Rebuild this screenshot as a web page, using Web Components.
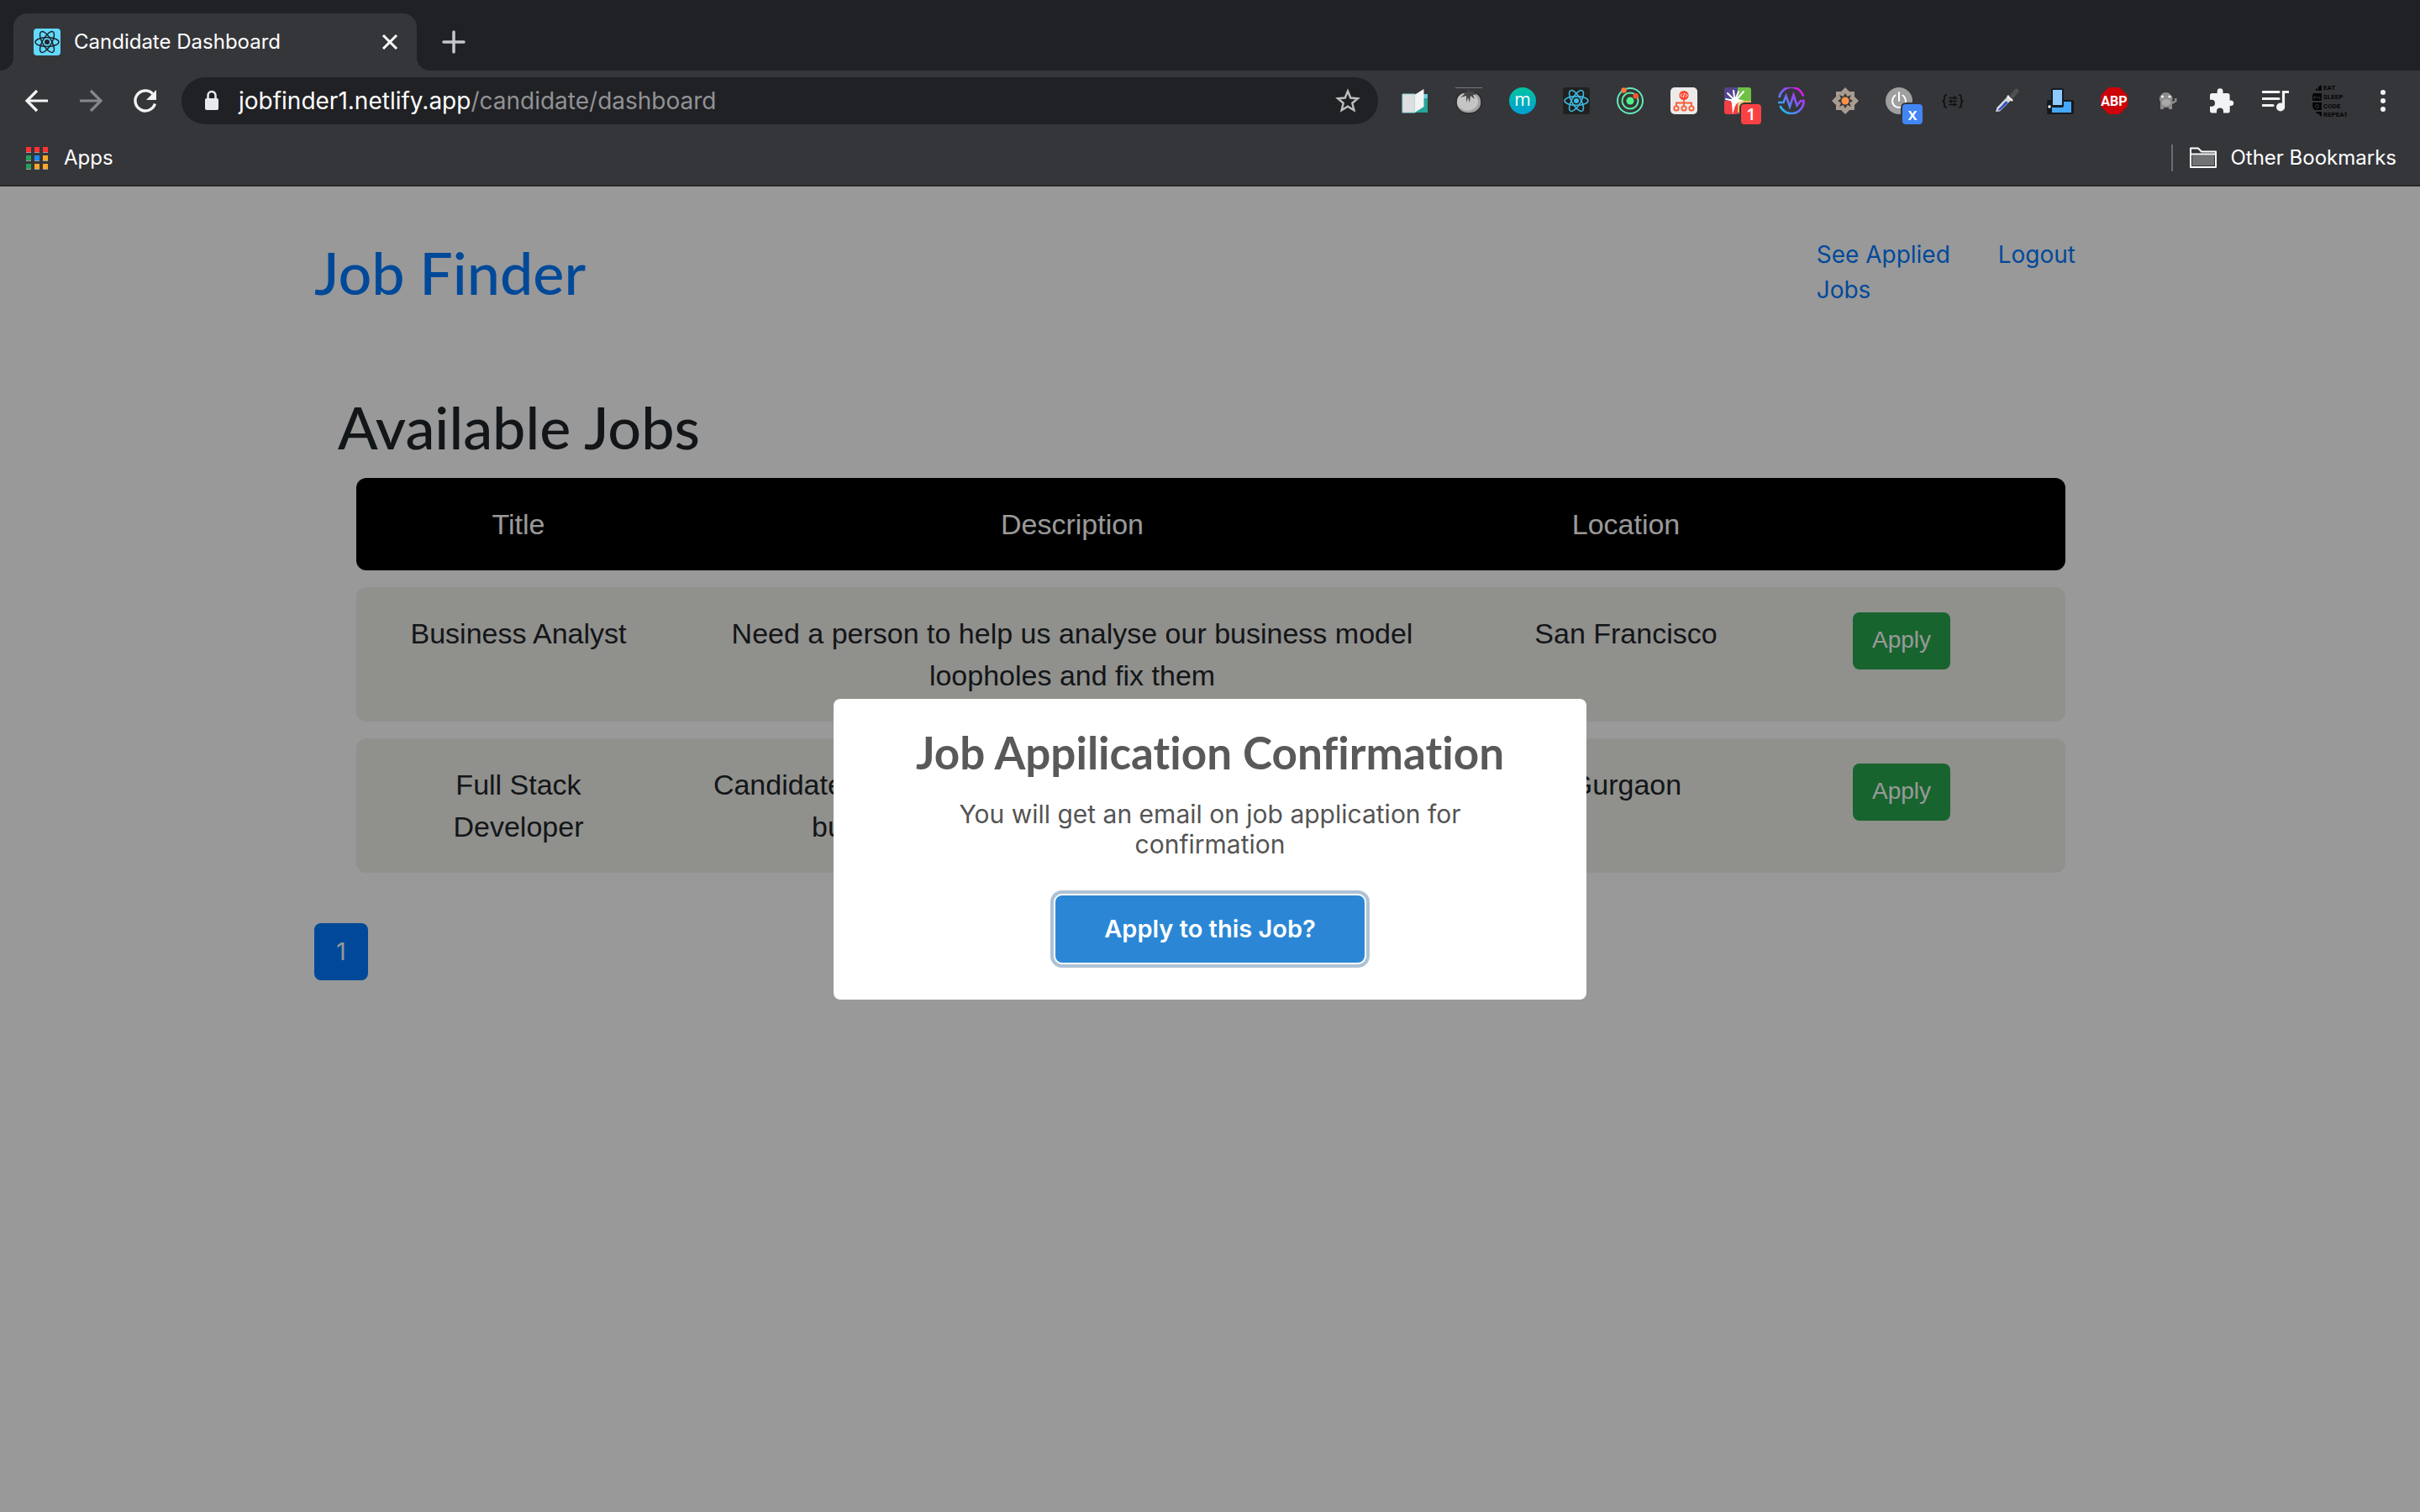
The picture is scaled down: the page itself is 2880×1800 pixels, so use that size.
<!DOCTYPE html>
<html lang="en">
<head>
<meta charset="utf-8">
<title>Candidate Dashboard</title>
<style>
  html, body { height: 100%; margin: 0; }
  body { font-family: Inter, "Liberation Sans", sans-serif; color: #212529; background: #fff; }
</style>
</head>
<body>
<browser-window>
  <tab-strip slot="tabs" label="Candidate Dashboard"></tab-strip>
  <tool-bar slot="toolbar" host="jobfinder1.netlify.app" path="/candidate/dashboard"></tool-bar>
  <bookmarks-bar slot="bookmarks"></bookmarks-bar>
  <candidate-page>
    <job-header slot="header">Job Finder</job-header>
    <job-table></job-table>
    <page-list slot="pages"></page-list>
    <confirm-dialog slot="dialog">
      <span slot="title">Job Appilication Confirmation</span>
      <span slot="text">You will get an email on job application for confirmation</span>
      <span slot="action">Apply to this Job?</span>
    </confirm-dialog>
  </candidate-page>
</browser-window>

<script>
const ORBITS = (c, w) => `<g fill="none" stroke="${c}" stroke-width="${w}"><ellipse cx="16" cy="16" rx="14" ry="5.4"/><ellipse cx="16" cy="16" rx="14" ry="5.4" transform="rotate(60 16 16)"/><ellipse cx="16" cy="16" rx="14" ry="5.4" transform="rotate(120 16 16)"/></g><circle cx="16" cy="16" r="3" fill="${c}"/>`;

const ICONS = {
  favicon: `<rect width="32" height="32" rx="4" fill="#61dafb"/>${ORBITS('#20232a', 1.5)}`,
  close: `<path d="M8 8l16 16M24 8L8 24" stroke="#fff" stroke-width="3" fill="none"/>`,
  plus: `<path d="M16 4v24M4 16h24" stroke="#c4c7cb" stroke-width="3.5" stroke-linecap="round"/>`,
  back: `<path d="M29 16H5M16 4L4 16l12 12" stroke="#f1f3f4" stroke-width="3.2" fill="none"/>`,
  forward: `<path d="M3 16h24M16 4l12 12-12 12" stroke="#85878a" stroke-width="3.2" fill="none"/>`,
  reload: `<path d="M28.400 19.500A12 12 0 1 1 25.600 7.600" stroke="#f1f3f4" stroke-width="3.4" fill="none"/><path d="M30 3v12H18z" fill="#f1f3f4"/>`,
  lock: `<rect x="8" y="13" width="16" height="14" rx="2" fill="#e8eaed"/><path d="M11.500 14V9.500a4.500 4.500 0 0 1 9 0V14" stroke="#e8eaed" stroke-width="2.500" fill="none"/>`,
  star: `<path d="M16 4.500l3.300 8 8.600.7-6.600 5.600 2.100 8.400L16 22.700l-7.400 4.500 2.100-8.400-6.600-5.600 8.600-.7z" fill="none" stroke="#bfbfbf" stroke-width="2.400"/>`,
  book: `<path d="M20 8h11v22H14z" fill="#26a69a"/><path d="M24 8h7v5h-7z" fill="#6ecbe0"/><path d="M1 8h15v22H1z" fill="#dedede" stroke="#8adbe0" stroke-width="1"/><path d="M16 8.500L26.500 2v21L16 29.800z" fill="#f3f3f3"/>`,
  tomato: `<path d="M0 .5h32" stroke="#77787a" stroke-width="1"/><path d="M16 7C6 3 1 11 1 18c0 8 7 13 15 13s15-5 15-13C31 11 26 3 16 7z" fill="#a2a2a2" stroke="#2a2a2a" stroke-width="1.500"/><ellipse cx="14.500" cy="17" rx="12.500" ry="10.500" fill="#c5c5c5"/><path d="M14 1l1 6-6-2 2 3-5 4 7-2v8l2-6 2 6 1-8 5 4-2-5 5-1-5-2 3-2-6 1z" fill="#454545"/>`,
  mmm: `<defs><linearGradient id="g" x2="0" y2="1"><stop stop-color="#00c4a0"/><stop offset="1" stop-color="#009fd4"/></linearGradient></defs><circle cx="16" cy="16" r="16" fill="url(#g)"/><text x="16" y="22" font-family="Open Sans" font-size="21" text-anchor="middle" fill="#fff">m</text>`,
  react: `<rect width="32" height="32" rx="3" fill="#20211f"/>${ORBITS('#3cb9e3', 1.6)}`,
  rings: `<circle cx="16" cy="16" r="4.500" fill="#4ff08a"/><g fill="none" stroke-width="2"><circle cx="16" cy="16" r="9.500" stroke="#58ef9b"/><circle cx="16" cy="16" r="15" stroke="#63e9b8"/></g><circle cx="8.500" cy="3.500" r="3.200" fill="#fb7b3c"/><circle cx="22.700" cy="10.300" r="3.200" fill="#fb5430"/>`,
  tree: `<rect width="32" height="32" rx="5" fill="#ecebea"/><circle cx="16" cy="9.500" r="5.600" fill="#fc4632"/><path d="M14 7.500l-2 2 2 2M18 7.500l2 2-2 2M16.700 7l-1.400 5" stroke="#fff" stroke-width="1" fill="none"/><g fill="none" stroke="#fc5a32" stroke-width="1.800"><path d="M16 15v7M7 22v-3.500h18V22"/><circle cx="7" cy="25" r="2.700"/><circle cx="16" cy="25" r="2.700"/><circle cx="25" cy="25" r="2.700"/></g>`,
  splash: `<path d="M3 0h13v16H0V3a3 3 0 0 1 3-3z" fill="#54458e"/><path d="M16 0h13a3 3 0 0 1 3 3v13H16z" fill="#6fc045"/><path d="M0 16h16v16H3a3 3 0 0 1-3-3z" fill="#f23f43"/><path d="M16 16h16v14H16z" fill="#f6b951"/><path d="M17.500 18h15v14h-15z" fill="#ead9a0"/><g stroke="#fff" stroke-width="2" stroke-linecap="round"><path d="M12 16L2 14M12 15L4 7M12.500 15L11 4M13 15L17 5M14 15L23 5"/></g><path d="M7 14l10 0 7 2-8 2-3 4-3 10-1-13z" fill="#fff"/>`,
  wave: `<defs><linearGradient id="g" x1="0" y1="1" x2="1" y2="0"><stop stop-color="#00dcea"/><stop offset=".5" stop-color="#7464f5"/><stop offset="1" stop-color="#ff00f0"/></linearGradient></defs><g fill="none" stroke="url(#g)" stroke-width="2.600"><path d="M1.500 12A14.600 14.600 0 0 1 30 10.500M2.500 22A14.600 14.600 0 0 0 30.600 16H27l-4.500 5.500-4-12.500-4.500 14-4.500-13-3 8H0"/></g>`,
  flower: `<path d="M16 0l5 5h6v6l5 5-5 5v6h-6l-5 5-5-5H5v-6l-5-5 5-5V5h6z" fill="#a89b90"/><path d="M16 7l2.500 4 4.500-2-2 4.500 4 2.500-4 2.500 2 4.500-4.500-2-2.500 4-2.500-4-4.500 2 2-4.500-4-2.500 4-2.500-2-4.500 4.500 2z" fill="#38383a"/><circle cx="16" cy="16" r="4.500" fill="#fd9248"/>`,
  power: `<circle cx="16" cy="16" r="16" fill="#9f9f9f"/><path d="M16 6v10M11.500 9.500a8 8 0 1 0 9 0" stroke="#fff" stroke-width="2" fill="none" stroke-linecap="round"/>`,
  braces: `<path d="M9 9c-3 0-3 1-3 4s-1 3.500-2.500 3.500C5 16.500 6 17 6 20s0 4 3 4M23 9c3 0 3 1 3 4s1 3.500 2.500 3.500C27 16.500 26 17 26 20s0 4-3 4M11 12.500h10M11 16.500h10M11 20.500h10M18 10.500v4M14 14.500v4M18 18.500v4" fill="none" stroke="#101011" stroke-width="1.700"/>`,
  dropper: `<path d="M3 29l1.500-5L17 11l4.500 4L8 28.500z" fill="#d8d8d8"/><path d="M5 27.500l10-11 3 1.500L8.500 27z" fill="#2c50c8"/><path d="M17 10l6 6" stroke="#f4f4f4" stroke-width="2.500"/><path d="M19 11l6-8c3-3 7 0 5 3l-7 8z" fill="#505050"/>`,
  devices: `<rect x="0" y="15" width="32" height="17" rx="2" fill="#15181c"/><rect x="6" y="17" width="23" height="13" fill="#45a8fa"/><rect x="5" y="1" width="15" height="23" rx="2" fill="#161d25"/><rect x="7" y="3" width="11" height="18" fill="#8ecafd"/><circle cx="3" cy="23" r="1.700" fill="#fff"/>`,
  abp: `<path d="M9.400 0h13.200L32 9.400v13.200L22.600 32H9.400L0 22.600V9.400z" fill="#cc0308"/><text x="16" y="21.500" font-family="Roboto" font-weight="700" font-size="16" text-anchor="middle" fill="#fff">ABP</text>`,
  beast: `<path d="M7 26V17c-2-2-1-7 1-8 1-4 10-4 11 0 3 1 3 5 2 8v9h-4v-2h-6v2z" fill="#8c8c8c"/><path d="M20 17l4-1v-3h2.500v4l-5 3z" fill="#8c8c8c"/><circle cx="9.500" cy="11" r="1.500" fill="#fff"/><circle cx="18" cy="11" r="1.500" fill="#fff"/><ellipse cx="14" cy="18" rx="5.500" ry="4" fill="#a9a9a9"/>`,
  puzzle: `<path d="M27.500 15.500H25.600V9.500a2.500 2.500 0 0 0-2.500-2.500H17.500V4.700a3.400 3.400 0 0 0-6.800 0V7H4.500A2.500 2.500 0 0 0 2 9.500v5.300h2a4 4 0 0 1 0 8H2v5.500A2.500 2.500 0 0 0 4.500 30.500H10v-2a4 4 0 0 1 8 0v2h5.200a2.500 2.500 0 0 0 2.500-2.500v-6h1.800a3.300 3.300 0 0 0 0-6.500z" fill="#f1f3f4"/>`,
  music: `<path d="M1 5.500h19M1 13.500h19M1 21.500h12M25.500 24V5.500H31" stroke="#f1f3f4" stroke-width="3.200" fill="none" stroke-linecap="round"/><circle cx="22" cy="23.500" r="5" fill="#f1f3f4"/>`,
  dots: `<g fill="#f1f3f4"><circle cx="16" cy="6" r="3"/><circle cx="16" cy="16" r="3"/><circle cx="16" cy="26" r="3"/></g>`,
  avatar: `<defs><clipPath id="c"><circle cx="21" cy="21" r="21"/></clipPath></defs><g clip-path="url(#c)"><g fill="#050505"><path d="M2 9V6h2v3M5 9V4h2v5M8 9V0h4v9H1z"/><rect x="1" y="12" width="11" height="9" rx="1"/><rect x="1" y="23" width="11" height="9" rx="1"/><rect x="1" y="34" width="11" height="9" rx="1"/></g><path d="M3 15v4M3 17h7v2" stroke="#35363a" fill="none"/><circle cx="6.500" cy="27.500" r="2" fill="none" stroke="#35363a"/><circle cx="7.500" cy="38.500" r="2" fill="none" stroke="#35363a"/></g><g fill="#050505" font-family="Liberation Sans Narrow, Roboto" font-weight="700" font-size="8"><text x="14" y="8">EAT</text><text x="14" y="19">SLEEP</text><text x="14" y="30">CODE</text><text x="14" y="40">REPEAT</text></g>`,
  folder: `<path d="M1 27V4.500h9l4 4h17V27z" fill="none" stroke="#fff" stroke-width="2" stroke-linejoin="round"/><path d="M3 13h26v12H3z" fill="#717275"/><path d="M1 11.500h30" stroke="#fff" stroke-width="2"/>`,
  apps: ['#ff3131 #ff3131 #ff3131', '#2a9e57 #1a8cf7 #f9a825', '#2a9e57 #f9a825 #f9a825'].map((r, y) => r.split(' ').map((c, x) => `<rect x="${3 + x * 10}" y="${3 + y * 10}" width="6" height="6" fill="${c}"/><rect x="${3 + x * 10}" y="${9 + y * 10}" width="6" height="1" fill="#9a9a9a"/>`).join('')).join('')
};

function define(name, render) {
  customElements.define(name, class extends HTMLElement {
    connectedCallback() {
      if (this.shadowRoot) return;
      this.attachShadow({ mode: 'open' }).innerHTML = render(this);
    }
  });
}

define('ui-icon', el => {
  const size = +(el.getAttribute('size') || 32);
  const box = el.getAttribute('name') === 'avatar' ? 42 : 32;
  return `<style>:host{display:block;flex:none}svg{display:block}</style>
  <svg width="${size}" height="${size}" viewBox="0 0 ${box} ${box}" aria-hidden="true">${ICONS[el.getAttribute('name')]}</svg>`;
});

define('browser-window', () => `<style>
  :host{display:flex;flex-direction:column;min-height:100vh}
  header{display:flex;flex-direction:column;background:#35363a;border-bottom:2px solid #28292b}
  main{flex:1;display:flex;flex-direction:column}
</style><header><slot name="tabs"></slot><slot name="toolbar"></slot><slot name="bookmarks"></slot></header><main><slot></slot></main>`);

define('tab-strip', el => `<style>
  :host{display:flex;align-items:flex-end;background:#202124;height:84px;padding-left:16px}
  .tab{position:relative;display:flex;align-items:center;box-sizing:border-box;width:480px;height:68px;padding:0 16px 0 24px;gap:16px;background:#35363a;border-radius:16px 16px 0 0;color:#fff;font-size:24px;line-height:32px}
  .tab::before,.tab::after{content:"";position:absolute;bottom:0;width:16px;height:16px}
  .tab::before{right:100%;background:radial-gradient(circle at 0 0,#202124 16px,#35363a 16px)}
  .tab::after{left:100%;background:radial-gradient(circle at 100% 0,#202124 16px,#35363a 16px)}
  .label{flex:1}
  button{border:0;padding:0;background:none;display:flex}
  .new{align-self:stretch;align-items:center;padding:16px 0 0 28px}
</style>
<div class="tab"><ui-icon name="favicon"></ui-icon><span class="label">${el.getAttribute('label')}</span><button aria-label="Close tab"><ui-icon name="close"></ui-icon></button></div>
<button class="new" aria-label="New tab"><ui-icon name="plus"></ui-icon></button>`);

define('tool-button', el => `<style>
  :host{display:block;flex:none;width:64px}
  button{position:relative;display:flex;align-items:center;justify-content:center;width:64px;height:56px;border:0;padding:0;background:none}
  .badge{position:absolute;left:34px;top:30px;width:24px;height:24px;border:2px solid #35363a;border-radius:6px;color:#fff;background:${el.getAttribute('badge-color')};font:600 20px/24px "Open Sans",sans-serif}
</style><button aria-label="${el.getAttribute('name')}"><ui-icon name="${el.getAttribute('name')}" size="${el.getAttribute('size') || 32}"></ui-icon>${el.hasAttribute('badge') ? `<span class="badge">${el.getAttribute('badge')}</span>` : ''}</button>`);

define('tool-bar', el => {
  const tools = ['book', 'tomato', 'mmm', 'react', 'rings', 'tree', 'splash', 'wave', 'flower', 'power', 'braces', 'dropper', 'devices', 'abp', 'beast', 'puzzle', 'music', 'avatar', 'dots'];
  const extra = { splash: 'badge="1" badge-color="#f94144"', power: 'badge="x" badge-color="#4285f4"', avatar: 'size="42"' };
  return `<style>
  :host{display:flex;align-items:center;padding:8px 12px}
  .address{flex:1;display:flex;align-items:center;height:56px;margin:0 12px;padding:0 20px;border-radius:28px;background:#202124;color:#fff;font-size:28px;line-height:36px}
  .url{flex:1;padding-left:16px}
  .path{color:#909295}
</style>
<tool-button name="back"></tool-button><tool-button name="forward"></tool-button><tool-button name="reload"></tool-button>
<div class="address"><ui-icon name="lock"></ui-icon><div class="url" role="textbox" aria-label="Address">${el.getAttribute('host')}<span class="path">${el.getAttribute('path')}</span></div><ui-icon name="star"></ui-icon></div>
${tools.map(t => `<tool-button name="${t}" ${extra[t] || ''}></tool-button>`).join('')}`;
});

define('bookmarks-bar', () => `<style>
  :host{display:flex;align-items:center;justify-content:space-between;height:64px;padding:0 28px;color:#fff;font-size:24px;line-height:32px}
  a{display:flex;align-items:center;gap:16px;color:inherit;text-decoration:none}
  .other{border-left:2px solid #6b6c6f;padding-left:20px}
</style><a href="#"><ui-icon name="apps"></ui-icon>Apps</a><a class="other" href="#"><ui-icon name="folder"></ui-icon>Other Bookmarks</a>`);

define('candidate-page', () => `<style>
  :host{position:relative;display:block;flex:1}
  .container{display:flex;flex-direction:column;box-sizing:border-box;max-width:2132px;margin:0 auto;padding-top:60px}
</style><div class="container"><slot name="header"></slot><slot></slot><slot name="pages"></slot></div><slot name="dialog"></slot>`);

define('job-header', () => `<style>
  :host{display:flex;align-items:flex-start;justify-content:space-between;padding-right:36px}
  h1{margin:0;font:500 70px/84px Lato,sans-serif}
  a{color:#007bff;text-decoration:none}
  nav{display:flex;gap:48px;font-size:28px;line-height:42px}
  nav a:first-child{width:168px}
</style><h1><a href="#"><slot></slot></a></h1><nav><a href="#">See Applied Jobs</a><a href="#">Logout</a></nav>`);

define('job-table', () => {
  const jobs = [
    ['Business Analyst', 'Need a person to help us analyse our business model loopholes and fix them', 'San Francisco'],
    ['Full Stack Developer', 'Candidate must have good work experience for full stack<br>building our core application from scratch', 'Gurgaon']
  ];
  return `<style>
  :host{display:block;margin-top:100px}
  h2{margin:0 28px;font:500 70px/84px Lato,sans-serif}
  .wrap{margin:0 48px 0 50px}
  table{width:100%;table-layout:fixed;border-collapse:separate;border-spacing:0 20px;margin-top:-1px;font:400 34px/50px "Liberation Sans",sans-serif;text-align:center}
  col.side{width:358px}col.place{width:330px}
  th,td{padding:30px;vertical-align:top;font-weight:400}
  th{background:#000;color:#fff}
  td{background:#f0f0ec}
  th:first-child,td:first-child{padding-left:58px;border-radius:12px 0 0 12px}
  th:last-child,td:last-child{padding-right:62px;border-radius:0 12px 12px 0}
  button{display:block;margin:0 auto;height:68px;padding:0 23px 2px;border:0;border-radius:8px;background:#28a74d;color:#fff;font:400 28px/42px "Liberation Sans",sans-serif}
</style><h2>Available Jobs</h2>
<div class="wrap"><table><colgroup><col class="side"><col><col class="place"><col class="side"></colgroup>
<thead><tr><th scope="col">Title</th><th scope="col">Description</th><th scope="col">Location</th><th></th></tr></thead>
<tbody>${jobs.map(j => `<tr>${j.map(t => `<td>${t}</td>`).join('')}<td><button>Apply</button></td></tr>`).join('')}</tbody></table></div>`;
});

define('page-list', () => `<style>
  :host{display:flex;margin-top:40px}
  button{width:64px;height:68px;border:0;border-radius:8px;background:#007bff;color:#fff;font:400 28px/42px Inter,sans-serif}
</style><button aria-current="page">1</button>`);

define('confirm-dialog', () => `<style>
  :host{position:absolute;inset:0;display:grid;place-items:center;background:rgba(0,0,0,.4)}
  section{display:flex;flex-direction:column;align-items:center;box-sizing:border-box;width:896px;padding:32px 36px 44px;border-radius:8px;background:#fff;text-align:center}
  h2{margin:0 0 23px;color:#595959;font:700 53px/64px Lato,sans-serif;font-variant-ligatures:none}
  p{margin:0 0 43px;padding:0 96px;color:#545454;font-size:30px;line-height:36px}
  button{width:368px;height:80px;border:0;border-radius:8px;background:#2b87d5;color:#fff;font:600 29px/36px Inter,sans-serif;box-shadow:0 0 0 2px #fff,0 0 0 6px #aec2d6}
</style><section role="dialog" aria-modal="true"><h2><slot name="title"></slot></h2><p><slot name="text"></slot></p><button><slot name="action"></slot></button></section>`);
</script>
</body>
</html>
